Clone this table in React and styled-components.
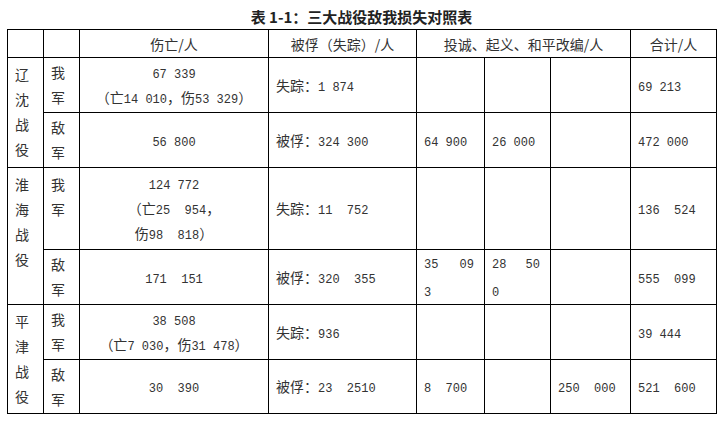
import styled, { createGlobalStyle } from "styled-components";

const GlobalStyle = createGlobalStyle`
  body {
    margin: 0;
    background: #fff;
  }
`;

const Page = styled.div`
  width: 724px;
  padding: 7px 0 0 7px;
  box-sizing: border-box;
  font-family: "Noto Sans CJK SC", sans-serif;
  color: #333;
`;

const Caption = styled.div`
  width: 709px;
  text-align: center;
  font-weight: bold;
  font-size: 15px;
  line-height: 20px;
  color: #222;
  margin-bottom: 2px;
`;

const Table = styled.table`
  border-collapse: collapse;
  table-layout: fixed;
  width: 709px;
  font-size: 14px;
  line-height: 25px;
`;

const Row = styled.tr`
  height: ${(p) => p.$h}px;
`;

const Head = styled.th`
  border: 1px solid #000;
  padding: 0;
  font-weight: normal;
  text-align: center;
  line-height: 22px;
`;

const Cell = styled.td`
  border: 1px solid #000;
  padding: ${(p) => (p.$top ? "4px 7px 0" : "0 7px")};
  text-align: ${(p) => (p.$center ? "center" : "left")};
  vertical-align: ${(p) => (p.$top ? "top" : "middle")};
  overflow: hidden;
`;

const Num = styled.span`
  font-family: "Liberation Mono", monospace;
  font-size: 12px;
  line-height: 1;
  white-space: pre;
`;

const Spread = styled.div`
  display: flex;
  justify-content: space-between;
  align-items: center;
  height: 26px;
  margin-right: 3px;
`;

const widths = [36, 36, 189, 148, 68, 66, 80, 86];

export default function App() {
  return (
    <>
      <GlobalStyle />
      <Page>
        <Caption>表 1-1：三大战役敌我损失对照表</Caption>
        <Table>
          <colgroup>
            {widths.map((w, i) => (
              <col key={i} style={{ width: w }} />
            ))}
          </colgroup>
          <tbody>
            <Row $h={28}>
              <Head />
              <Head />
              <Head>伤亡/人</Head>
              <Head>被俘（失踪）/人</Head>
              <Head colSpan={3}>投诚、起义、和平改编/人</Head>
              <Head>合计/人</Head>
            </Row>

            <Row $h={55}>
              <Cell rowSpan={2} $top>辽沈战役</Cell>
              <Cell>我军</Cell>
              <Cell $center>
                <Num>67 339</Num>
                <br />（亡<Num>14 010</Num>，伤<Num>53 329</Num>）
              </Cell>
              <Cell>失踪：<Num>1 874</Num></Cell>
              <Cell />
              <Cell />
              <Cell />
              <Cell><Num>69 213</Num></Cell>
            </Row>
            <Row $h={55}>
              <Cell>敌军</Cell>
              <Cell $center><Num>56 800</Num></Cell>
              <Cell>被俘：<Num>324 300</Num></Cell>
              <Cell><Num>64 900</Num></Cell>
              <Cell><Num>26 000</Num></Cell>
              <Cell />
              <Cell><Num>472 000</Num></Cell>
            </Row>

            <Row $h={82}>
              <Cell rowSpan={2} $top>淮海战役</Cell>
              <Cell $top>我军</Cell>
              <Cell $center>
                <Num>124 772</Num>
                <br />（亡<Num>25  954</Num>，
                <br />伤<Num>98  818</Num>）
              </Cell>
              <Cell>失踪：<Num>11  752</Num></Cell>
              <Cell />
              <Cell />
              <Cell />
              <Cell><Num>136  524</Num></Cell>
            </Row>
            <Row $h={55}>
              <Cell>敌军</Cell>
              <Cell $center><Num>171  151</Num></Cell>
              <Cell>被俘：<Num>320  355</Num></Cell>
              <Cell>
                <Spread><Num>35</Num><Num>09</Num></Spread>
                <Num>3</Num>
              </Cell>
              <Cell>
                <Spread><Num>28</Num><Num>50</Num></Spread>
                <Num>0</Num>
              </Cell>
              <Cell />
              <Cell><Num>555  099</Num></Cell>
            </Row>

            <Row $h={55}>
              <Cell rowSpan={2} $top>平津战役</Cell>
              <Cell>我军</Cell>
              <Cell $center>
                <Num>38 508</Num>
                <br />（亡<Num>7 030</Num>，伤<Num>31 478</Num>）
              </Cell>
              <Cell>失踪：<Num>936</Num></Cell>
              <Cell />
              <Cell />
              <Cell />
              <Cell><Num>39 444</Num></Cell>
            </Row>
            <Row $h={54}>
              <Cell>敌军</Cell>
              <Cell $center><Num>30  390</Num></Cell>
              <Cell>被俘：<Num>23  2510</Num></Cell>
              <Cell><Num>8  700</Num></Cell>
              <Cell />
              <Cell><Num>250  000</Num></Cell>
              <Cell><Num>521  600</Num></Cell>
            </Row>
          </tbody>
        </Table>
      </Page>
    </>
  );
}
